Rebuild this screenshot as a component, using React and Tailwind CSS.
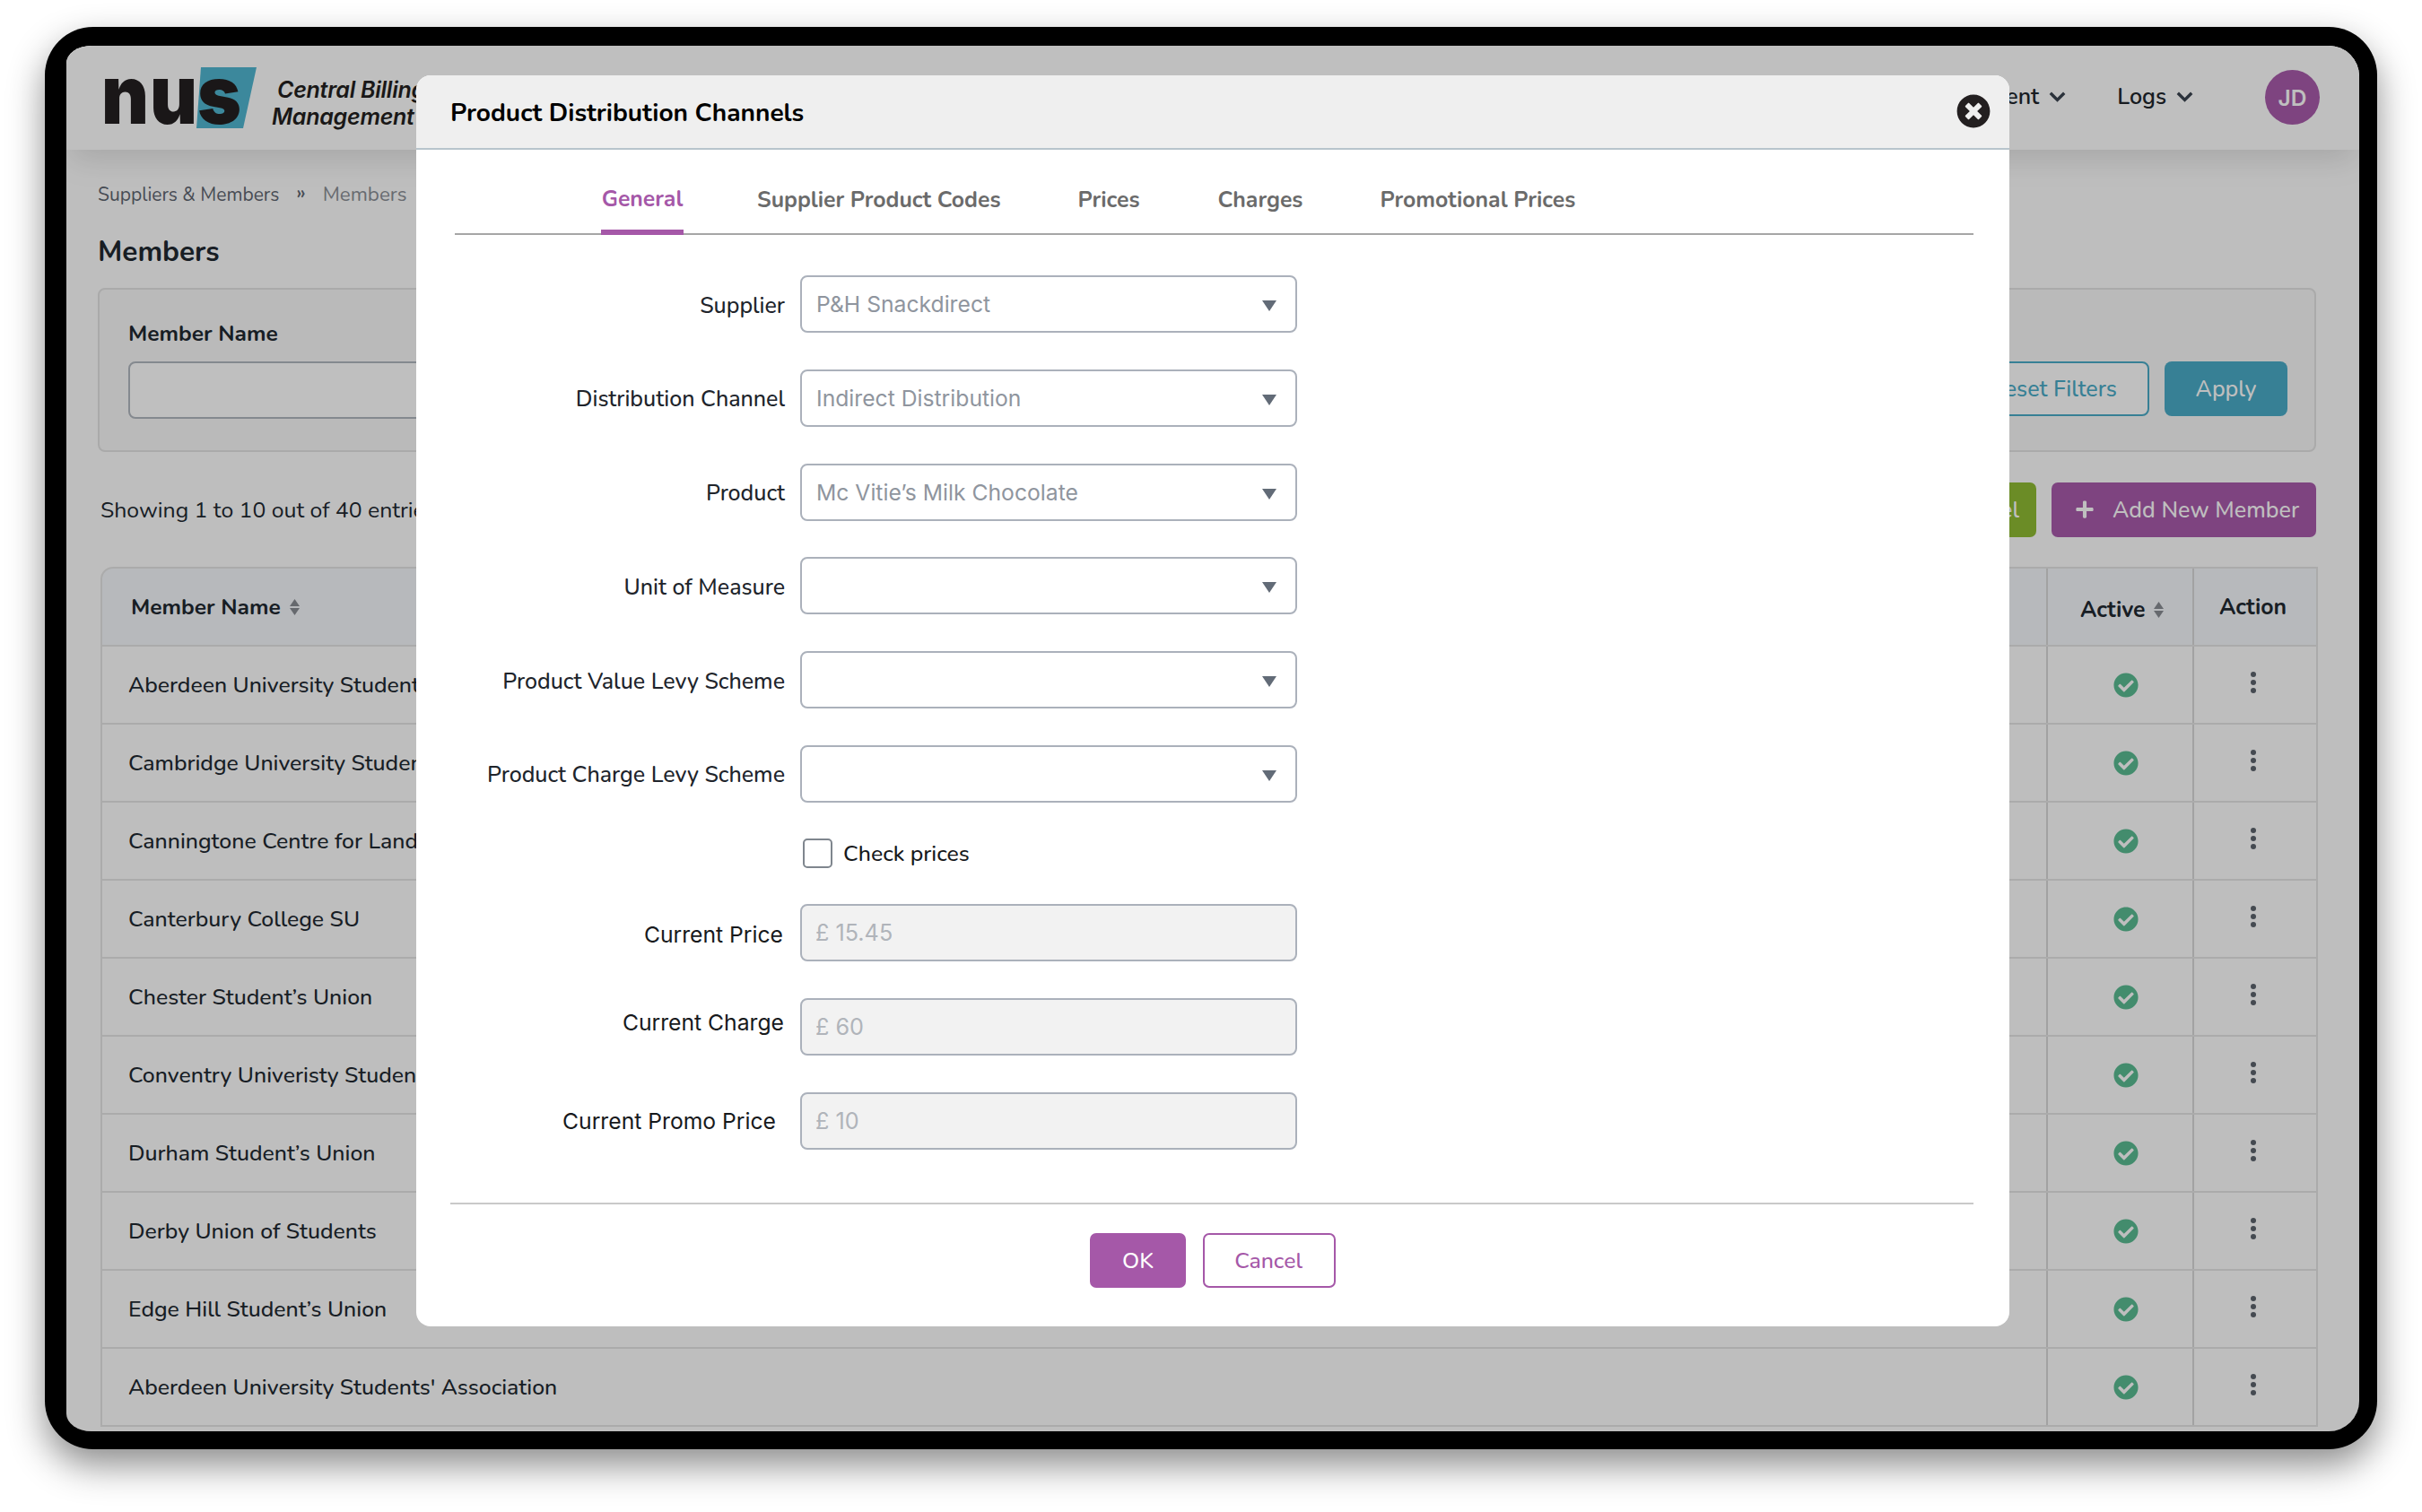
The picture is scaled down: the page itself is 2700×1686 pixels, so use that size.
import { FaCheckCircle, FaTimesCircle, FaPlus } from "react-icons/fa";

const MEMBERS = [
  "Aberdeen University Students' Association",
  "Cambridge University Students' Union",
  "Canningtone Centre for Land Studies",
  "Canterbury College SU",
  "Chester Student’s Union",
  "Conventry Univeristy Students' Union",
  "Durham Student’s Union",
  "Derby Union of Students",
  "Edge Hill Student’s Union",
  "Aberdeen University Students' Association",
];

const TABS = [
  { label: "Supplier Product Codes", spacing: "ml-[82px]" },
  { label: "Prices", spacing: "ml-[86px]" },
  { label: "Charges", spacing: "ml-[87px]" },
  { label: "Promotional Prices", spacing: "ml-[86px]" },
];

const SELECTS = [
  { label: "Supplier", value: "P&H Snackdirect" },
  { label: "Distribution Channel", value: "Indirect Distribution" },
  { label: "Product", value: "Mc Vitie’s Milk Chocolate" },
  { label: "Unit of Measure", value: "" },
  { label: "Product Value Levy Scheme", value: "" },
  { label: "Product Charge Levy Scheme", value: "" },
];

const PRICES = [
  { label: "Current Price", value: "£ 15.45", labelClass: "pr-[19px] pt-[5px]" },
  { label: "Current Charge", value: "£ 60", labelClass: "pr-[18px] pb-[9px]" },
  { label: "Current Promo Price", value: "£ 10", labelClass: "pr-[27px] pt-[1px]" },
];

function Logo() {
  return (
    <svg className="h-[110px] w-[174px] shrink-0 overflow-visible" viewBox="0 -23 174 110">
      <path d="M107 1H169L154 69H102Z" fill="#50b6d0" />
      <g fill="#231f20" fontFamily="Inter, sans-serif" fontWeight="900" fontSize="91">
        <text x="-4" y="64" textLength="53" lengthAdjust="spacingAndGlyphs">n</text>
        <text x="50" y="64" textLength="53" lengthAdjust="spacingAndGlyphs">u</text>
        <text x="103" y="64" textLength="49" lengthAdjust="spacingAndGlyphs">s</text>
      </g>
    </svg>
  );
}

function Chevron() {
  return (
    <svg className="h-[12px] w-[19px]" viewBox="0 0 19 12" fill="none" stroke="#3a434f" strokeWidth="3.4">
      <path d="M1.8 1.8L9.5 9.4L17.2 1.8" />
    </svg>
  );
}

function SortIcon() {
  return (
    <svg className="mt-[-2px] h-[18px] w-[11px]" viewBox="0 0 11 18" fill="#888c93">
      <path d="M5.5 0L11 8H0Z" />
      <path d="M5.5 18L11 10H0Z" />
    </svg>
  );
}

function Dots() {
  return (
    <svg className="h-[24px] w-[6px]" viewBox="0 0 6 24" fill="#5c636d">
      <circle cx="3" cy="3" r="3" />
      <circle cx="3" cy="12" r="3" />
      <circle cx="3" cy="21" r="3" />
    </svg>
  );
}

function Header() {
  return (
    <header className="relative flex h-[116px] shrink-0 items-start bg-white pl-[43px] shadow-[0_15px_35px_-5px_rgba(0,0,0,0.13)]">
      <Logo />
      <div className="pt-[34px] font-['Inter',sans-serif] text-[25px] leading-[30px] font-semibold tracking-[-0.25px] whitespace-nowrap text-[#231f20] italic">
        <p className="pl-[18px]">Central Billing</p>
        <p className="pl-[12px]">Management</p>
      </div>
      <nav className="ml-auto flex h-[114px] items-center pr-[44px] text-[25px] font-semibold text-[#20262d]">
        <span className="pt-[2px]">Management</span>
        <span className="ml-[11px]"><Chevron /></span>
        <span className="ml-[57px] pt-[2px]">Logs</span>
        <span className="ml-[11px]"><Chevron /></span>
        <span className="ml-[80px] flex h-[61px] w-[61px] items-center justify-center rounded-full bg-[#a85bab] pt-[3px] font-['Inter',sans-serif] text-[24.5px] text-white">
          JD
        </span>
      </nav>
    </header>
  );
}

function Filters() {
  return (
    <section className="mr-[48px] ml-[35px] flex h-[183px] items-start rounded-[8px] border-2 border-[#e3e3e3] bg-[#f8f8f8] pr-[30px] pl-[32px]">
      <div className="pt-[32px]">
        <p className="text-[24.5px] leading-[34px] font-bold">Member Name</p>
        <div className="mt-[14px] h-[64px] w-[600px] rounded-[8px] border-2 border-[#b1b7bf] bg-white" />
      </div>
      <div className="ml-auto flex gap-[17px] pt-[80px] text-[25px] font-medium">
        <button className="h-[61px] w-[212px] rounded-[8px] border-2 border-[#4aabc7] bg-white pt-[2px] pr-[2px] text-[#4aabc7]">
          Reset Filters
        </button>
        <button className="h-[61px] w-[137px] rounded-[8px] bg-[#4aabc7] pt-[2px] text-white">Apply</button>
      </div>
    </section>
  );
}

function MembersTable() {
  return (
    <div className="mr-[46px] ml-[38px] text-[24.8px]">
      <div className="grid h-[89px] grid-cols-[1fr_163px_138px] rounded-tl-[14px] border-2 border-[#e5e5e5] bg-[#f4f7fb] font-bold">
        <div className="flex items-center gap-[10px] pt-[2px] pl-[32px] text-[24.5px]">
          Member Name <SortIcon />
        </div>
        <div className="flex items-center gap-[9px] border-l-2 border-[#d8d8d8] pt-[9px] pl-[36px]">
          Active <SortIcon />
        </div>
        <div className="flex items-center border-l-2 border-[#d8d8d8] pt-[3px] pl-[28px]">Action</div>
      </div>
      {MEMBERS.map((name, i) => (
        <div key={i} className="grid h-[87px] grid-cols-[1fr_163px_138px] border-x-2 border-b-2 border-[#e5e5e5]">
          <div className="flex items-center pt-[3px] pl-[29px] font-medium whitespace-nowrap">{name}</div>
          <div className="flex items-center border-l-2 border-[#d8d8d8] pt-[1px] pl-[73px]">
            <FaCheckCircle className="h-[28px] w-[28px] text-[#5abb92]" />
          </div>
          <div className="flex items-center border-l-2 border-[#d8d8d8] pb-[5px] pl-[63px]">
            <Dots />
          </div>
        </div>
      ))}
    </div>
  );
}

function MembersPage() {
  return (
    <div className="flex h-full flex-col bg-[#fefefe] text-[#212830]">
      <Header />
      <div className="flex h-[100px] items-center pl-[35px] text-[21px] text-[#5f6671]">
        <span className="pt-[1px]">Suppliers &amp; Members</span>
        <span className="ml-[19px] pb-[4px] text-[22px] font-semibold">»</span>
        <span className="ml-[19px] text-[22.4px] text-[#8b8f96]">Members</span>
      </div>
      <h1 className="h-[54px] pl-[35px] text-[31.5px] leading-[28px] font-bold">Members</h1>
      <Filters />
      <div className="mr-[48px] ml-[38px] flex h-[128px] items-center">
        <p className="pt-[3px] text-[24.8px]">Showing 1 to 10 out of 40 entries</p>
        <div className="ml-auto flex gap-[17px] text-[25px] font-medium text-white">
          <button className="h-[61px] w-[224px] rounded-[7px] bg-[#8fbb33] pt-[3px] pr-[19px] text-right">Export to Excel</button>
          <button className="flex h-[61px] w-[295px] items-center rounded-[7px] bg-[#a85bab] pl-[26px]">
            <FaPlus className="h-[22px] w-[22px]" />
            <span className="ml-[20px] pt-[3px] tracking-[0.1px]">Add New Member</span>
          </button>
        </div>
      </div>
      <MembersTable />
    </div>
  );
}

function SelectRow({ label, value }) {
  return (
    <div className="flex h-[64px] items-center">
      <label className="w-[428px] pt-[3px] pr-[17px] text-right text-[25px] leading-[30px] font-medium text-[#20242b]">
        {label}
      </label>
      <div className="flex h-full w-[554px] items-center justify-between rounded-[8px] border-2 border-[#abb1bb] bg-white pr-[21px] pl-[16px] font-['Inter',sans-serif] text-[24.7px] text-[#8f959e]">
        <span className="pt-[2px]">{value}</span>
        <svg className="mt-[4px] h-[12px] w-[16px]" viewBox="0 0 16 12" fill="#626b77">
          <path d="M0 0H16L8 12Z" />
        </svg>
      </div>
    </div>
  );
}

function PriceRow({ label, value, labelClass }) {
  return (
    <div className="flex h-[64px] items-center">
      <label className={`w-[428px] text-right font-['Inter',sans-serif] text-[24.7px] text-[#17191c] ${labelClass}`}>
        {label}
      </label>
      <div className="flex h-full w-[554px] items-center rounded-[8px] border-2 border-[#abb1bb] bg-[#f2f2f2] pt-[2px] pl-[15px] font-['Inter',sans-serif] text-[25.2px] text-[#b0b4ba]">
        {value}
      </div>
    </div>
  );
}

function Modal() {
  return (
    <div className="absolute top-[33px] left-[390px] flex h-[1395px] w-[1776px] flex-col overflow-hidden rounded-[16px] bg-white">
      <div className="flex h-[83px] items-center justify-between border-b-2 border-[#b8c4cc] bg-[#efefef] pr-[21px] pl-[38px]">
        <h2 className="pt-[3px] text-[28.1px] font-bold text-black">Product Distribution Channels</h2>
        <FaTimesCircle className="mb-[2px] h-[38px] w-[38px] text-[#231f20]" />
      </div>

      <div className="mr-[40px] ml-[43px] flex h-[95px] border-b-2 border-[#a6a6a6] pl-[163px] text-[24.8px] font-bold text-[#6b6b6b]">
        <span className="-mb-[2px] w-[92px] border-b-[6px] border-[#a558a8] pt-[38px] text-center leading-[34px] text-[#a558a8]">
          General
        </span>
        {TABS.map((tab) => (
          <span key={tab.label} className={`pt-[39px] leading-[34px] ${tab.spacing}`}>
            {tab.label}
          </span>
        ))}
      </div>

      <div className="flex flex-col gap-[40.8px] pt-[45px]">
        {SELECTS.map((s) => (
          <SelectRow key={s.label} {...s} />
        ))}
      </div>

      <div className="mt-[41px] flex h-[32px] items-center pl-[431px]">
        <span className="h-[33px] w-[33px] rounded-[5px] border-2 border-[#7f868e]" />
        <span className="ml-[12px] pt-[2px] text-[24.8px] font-medium text-[#17191c]">Check prices</span>
      </div>

      <div className="mt-[40px] flex flex-col gap-[40.8px]">
        {PRICES.map((p) => (
          <PriceRow key={p.label} {...p} />
        ))}
      </div>

      <div className="mt-auto mr-[40px] ml-[38px] flex h-[138px] items-start border-t-2 border-[#c9c9c9] pt-[32px] pl-[713px] text-[24.8px] font-medium">
        <button className="h-[61px] w-[107px] rounded-[7px] bg-[#a558a8] pt-[2px] text-white">OK</button>
        <button className="ml-[19px] h-[61px] w-[148px] rounded-[7px] border-2 border-[#a558a8] pt-[2px] pr-[2px] text-[#a558a8]">
          Cancel
        </button>
      </div>
    </div>
  );
}

export default function App() {
  return (
    <div className="h-[1686px] w-[2700px] overflow-hidden bg-white pt-[30px] pl-[50px] font-['Nunito','Lato',sans-serif]">
      <div className="h-[1586px] w-[2600px] rounded-[54px] bg-black pt-[21px] pr-[20px] pb-[20px] pl-[24px] shadow-[0_18px_40px_rgba(0,0,0,0.45)]">
        <div className="relative h-full overflow-hidden rounded-l-[28px_20px] rounded-r-[34px]">
          <MembersPage />
          <div className="absolute inset-0 bg-black/25" />
          <Modal />
        </div>
      </div>
    </div>
  );
}
